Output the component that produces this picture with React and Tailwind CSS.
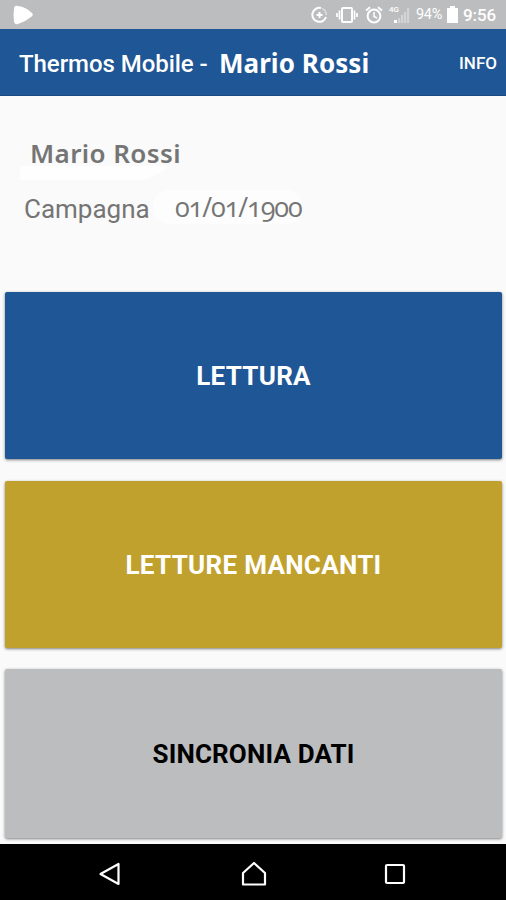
import React from "react";

const actions = [
  { label: "LETTURA", box: "h-[167px] bg-[#1e5696] text-white", text: "tracking-[0.3px]" },
  { label: "LETTURE MANCANTI", box: "h-[167px] bg-[#c1a12e] text-white", text: "tracking-[0.3px]" },
  { label: "SINCRONIA DATI", box: "-mt-px h-[169px] bg-[#bcbdbe] text-black", text: "tracking-[0.15px]" },
];

function StatusBar() {
  return (
    <div className="flex h-[29px] items-center justify-between bg-[#bcbdbe] pl-3 pr-[10px] text-white">
      <svg width="22" height="22" viewBox="0 0 22 22" fill="currentColor">
        <path d="M2 5Q2 1 6 2Q14 3 20 9Q22 11 19 13Q13 18 6 20Q3 21 2 18Q1 11 2 5Z" />
      </svg>
      <div className="flex items-center">
        <svg className="mr-[8px]" width="17" height="18" viewBox="0 0 17 18" fill="none" stroke="currentColor">
          <path d="M10 2A7 7 0 1 0 15 11" strokeWidth="2" />
          <path d="M11 2.4A7 7 0 0 1 15.2 9" strokeWidth="1.5" opacity=".5" />
          <path d="M8.5 6V12M5.5 9H11.5" strokeWidth="2" />
        </svg>
        <svg className="mr-[7px]" width="22" height="18" viewBox="0 0 22 18" fill="none" stroke="currentColor" strokeWidth="2">
          <rect x="6" y="2" width="10" height="14" rx="1" />
          <path d="M3.5 4.5V13.5M18.5 4.5V13.5M1 7V11M21 7V11" strokeWidth="1.7" />
        </svg>
        <svg className="mr-[6px]" width="18" height="18" viewBox="0 0 18 18" fill="none" stroke="currentColor" strokeWidth="2">
          <circle cx="9" cy="10" r="6.4" />
          <path d="M1 4.5L5 1.2M17 4.5L13 1.2" />
          <path d="M9 6V10.5L12 12" strokeWidth="1.5" />
        </svg>
        <div className="mr-[6px] flex h-[20px] w-[21px] items-start justify-between">
          <span className="font-['Roboto'] text-[8px] font-medium leading-[9px]">4G</span>
          <svg className="-ml-[6px] mt-[2px] shrink-0" width="17" height="17" viewBox="0 0 17 17" fill="currentColor">
            <rect x="1" y="13" width="3" height="3" />
            <path d="M5 11H7.2V16H5ZM8 8H10.2V16H8ZM11 5H13.2V16H11ZM14 1H16.2V16H14Z" opacity=".35" />
          </svg>
        </div>
        <span className="w-[27px] whitespace-nowrap pt-px font-['Roboto'] text-[14.5px] leading-5 tracking-[-0.3px]">94%</span>
        <svg className="ml-[4px] mr-[5px]" width="11" height="17" viewBox="0 0 11 17" fill="currentColor">
          <path d="M3 0H8V2H11V17H0V2H3Z" />
        </svg>
        <span className="w-[33px] whitespace-nowrap font-['Roboto'] text-[17px] font-medium leading-5 tracking-[-0.1px]">9:56</span>
      </div>
    </div>
  );
}

function Header() {
  return (
    <header className="flex h-[67px] items-center border-b border-[#184982] bg-[#1e5696] pl-[19px] pr-[9px] pt-[2px] text-white">
      <span className="w-[200px] whitespace-nowrap pt-px font-['Roboto'] text-[24px] font-medium tracking-[-0.05px]">
        Thermos Mobile -
      </span>
      <span className="whitespace-nowrap font-['Noto_Sans'] text-[26px] font-bold tracking-[0.05px]">
        Mario Rossi
      </span>
      <span className="ml-auto pt-px font-['Roboto'] text-[17px] font-medium">INFO</span>
    </header>
  );
}

function NavBar() {
  return (
    <nav className="flex h-[56px] items-center justify-between bg-black pl-[98px] pr-[100px] pt-1 text-white">
      <svg width="22" height="26" viewBox="0 0 22 26" fill="none" stroke="currentColor" strokeWidth="2.2" strokeLinejoin="round">
        <path d="M2.5 13L20.5 3V23Z" />
      </svg>
      <svg className="ml-[3px]" width="26" height="26" viewBox="0 0 26 26" fill="none" stroke="currentColor" strokeWidth="2.2" strokeLinejoin="round">
        <path d="M2 23.5V12L13 2L24 12V23.5Z" />
      </svg>
      <svg width="22" height="22" viewBox="0 0 22 22" fill="none" stroke="currentColor" strokeWidth="2.2" strokeLinejoin="round">
        <rect x="2" y="2" width="18" height="18" rx="1" />
      </svg>
    </nav>
  );
}

export default function App() {
  return (
    <div className="flex h-[900px] w-[506px] flex-col overflow-hidden bg-[#fafafa]">
      <StatusBar />
      <Header />
      <section className="h-[196px] pt-[38px] text-[#757575]">
        <div className="ml-5 w-fit rounded-br-[60px] bg-linear-to-b from-transparent from-70% to-[#fefefe] to-70% pb-2">
          <p className="pl-[10px] font-['Noto_Sans'] text-[26px] font-semibold leading-[38px] tracking-[0.4px]">
            Mario Rossi
          </p>
        </div>
        <div className="mt-[10px] flex items-start pl-6 text-[26px] leading-[38px]">
          <span className="w-[129px] font-['Roboto']">Campagna</span>
          <span className="rounded-2xl bg-[#fdfdfd] pl-[22px] font-['Open_Sans'] text-[27px] leading-[34px] tracking-[-1.1px] oldstyle-nums">
            01/01/1900
          </span>
        </div>
      </section>
      <main className="flex grow flex-col gap-[22px] pl-[5px] pr-1">
        {actions.map((action) => (
          <button
            key={action.label}
            className={`flex w-full shrink-0 items-center justify-center rounded-[2px] pt-[2px] font-['Roboto'] text-[26px] font-bold shadow-[0_1px_3px_rgba(0,0,0,0.5)] ${action.box}`}
          >
            <span className={action.text}>{action.label}</span>
          </button>
        ))}
      </main>
      <NavBar />
    </div>
  );
}
